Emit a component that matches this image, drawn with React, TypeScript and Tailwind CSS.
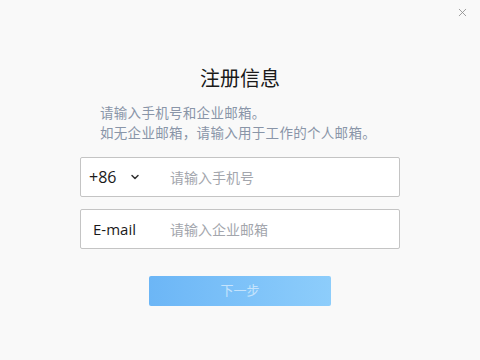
import { ChevronDown, X } from 'lucide-react'

const font = { fontFamily: '"Open Sans", "Noto Sans CJK SC", sans-serif' }

export default function App() {
  return (
    <div className="relative flex h-[360px] w-[480px] flex-col items-center bg-[#f9f9f9]" style={font}>
      <button type="button" className="absolute right-[11px] top-[6px] text-[#8a8a8a]">
        <X className="size-[13px]" strokeWidth={1.5} />
      </button>
      <h1 className="mt-[65px] text-[20px] leading-[28px] text-[#1a1a1a]">注册信息</h1>
      <div className="mt-[10px] w-[320px] pl-[20px] text-[13.5px] leading-[20px] tracking-[0.3px] text-[#8995a8]">
        <p>请输入手机号和企业邮箱。</p>
        <p>如无企业邮箱，请输入用于工作的个人邮箱。</p>
      </div>
      <div className="mt-[14px] flex h-[40px] w-[320px] items-center rounded-[2px] border border-[#c4c4c4] bg-white">
        <div className="flex w-[89px] items-center pl-[8px]">
          <span className="text-[16px] text-[#1a1a1a]">+86</span>
          <ChevronDown className="ml-[13px] size-[12px] text-[#333]" strokeWidth={3} />
        </div>
        <span className="text-[14px] text-[#a3a6ad]">请输入手机号</span>
      </div>
      <div className="mt-[12px] flex h-[40px] w-[320px] items-center rounded-[2px] border border-[#c4c4c4] bg-white">
        <span className="w-[89px] pl-[12px] text-[15px] text-[#1a1a1a]">E-mail</span>
        <span className="text-[14px] text-[#a3a6ad]">请输入企业邮箱</span>
      </div>
      <button
        type="button"
        className="mt-[27px] h-[30px] w-[182px] rounded-[2px] bg-gradient-to-r from-[#6cb6f6] to-[#8dcdfb] text-[13px] text-[#c5e3fc]"
      >
        下一步
      </button>
    </div>
  )
}
